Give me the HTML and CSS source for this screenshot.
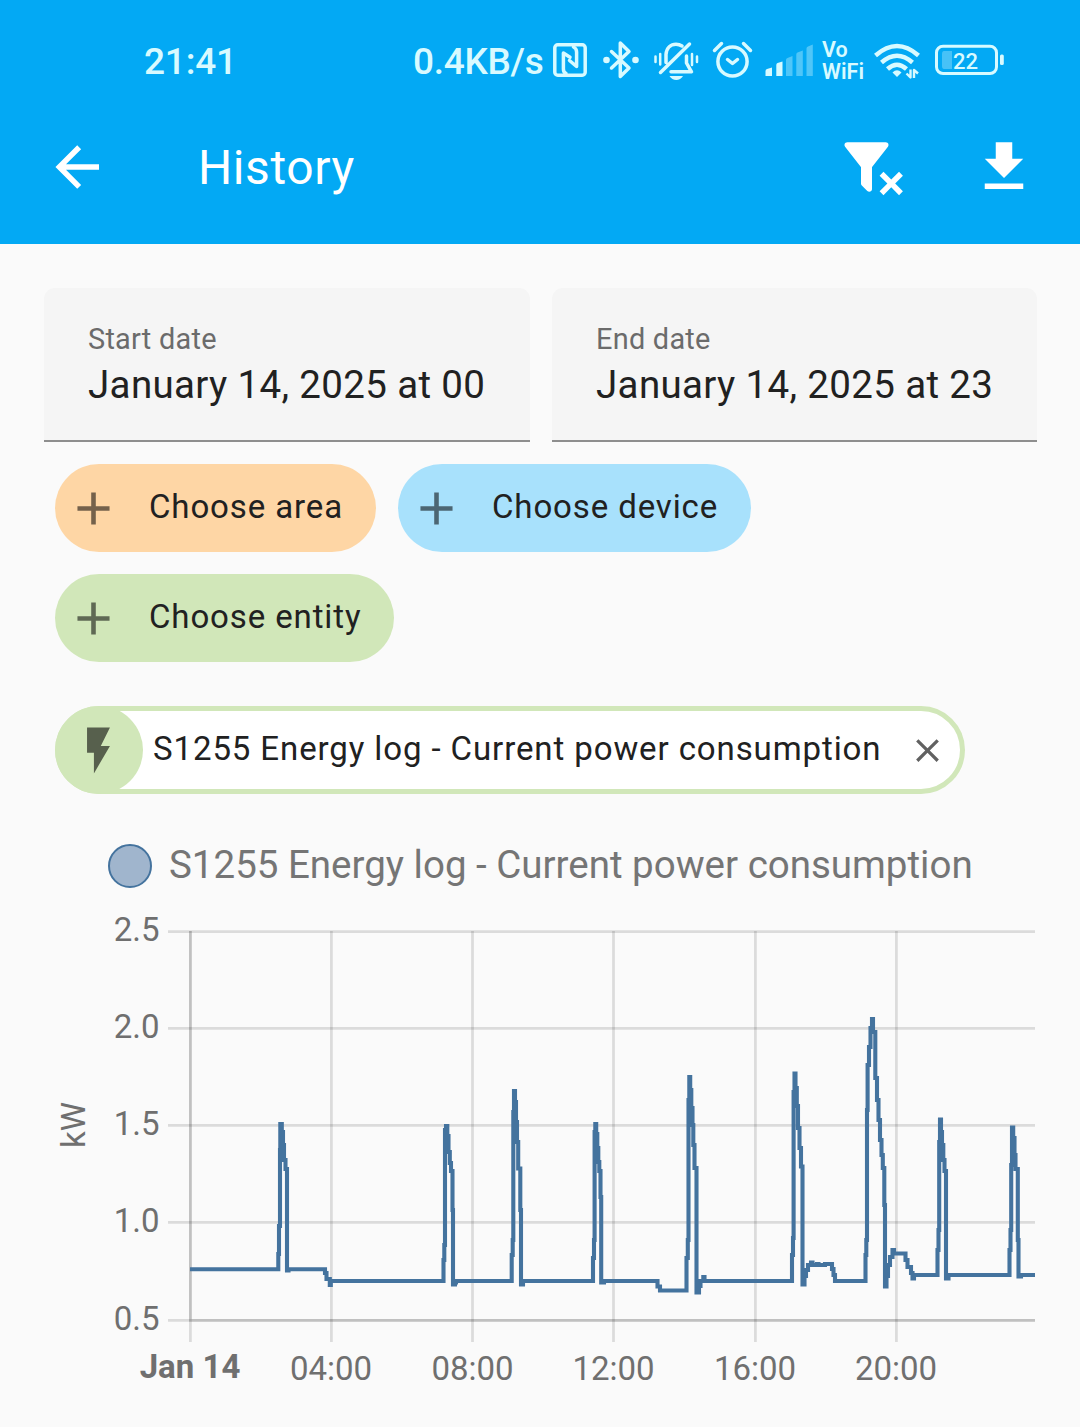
FILE: index.html
```html
<!DOCTYPE html>
<html lang="en">
<head>
  <meta charset="UTF-8" />
  <title>History</title>
  <link rel="stylesheet" href="styles.css">
</head>
<body>
  <header class="header">
    <div class="status-bar">
      <span class="clock">21:41</span>
      <span class="speed">0.4KB/s</span>
      <div class="status-icons">
        <!-- nfc -->
        <svg width="48" height="48" viewBox="548 36 48 48" class="line">
          <rect x="554.8" y="44.8" width="30.4" height="30.4" rx="3" />
          <path d="M566 73.500Q563.400 72.500 563.400 69V53L570 57.200M573.500 47Q576.600 48.500 576.600 52V66.500L569.500 60.500" />
        </svg>
        <!-- bluetooth -->
        <svg width="50" height="48" viewBox="596 36 50 48" class="line">
          <path d="M611.500 51.500L629 68L620.300 76.500V43L629 51.500L611.500 68" />
          <circle cx="606.5" cy="60" r="3.300" class="solid" />
          <circle cx="635.5" cy="60" r="3.300" class="solid" />
        </svg>
        <!-- vibrate, muted bell -->
        <svg width="60" height="48" viewBox="646 36 60 48" class="line">
          <path d="M689.500 44L660.500 72.500M666 62.500V54.500C666.500 47.500 671 44.200 676 44.200C678.500 44.200 680.500 45 682 46M686.500 56V63L691.500 71.800H671" />
          <path d="M655.500 56.500V62M660.200 54V64.500M692 54V65M697 56.500V62" class="thin" />
          <path d="M669.500 76H683Q680.500 80 676.300 80Q672 80 669.500 76Z" class="solid" />
        </svg>
        <!-- alarm -->
        <svg width="54" height="48" viewBox="706 36 54 48" class="line">
          <circle cx="732.5" cy="61.5" r="14.6" />
          <path d="M727.500 59.500L732.500 63.500L737.500 59.500M714.500 50.500L721.500 43.500M743.500 43.500L750.500 50.500" />
        </svg>
        <!-- signal -->
        <svg width="58" height="48" viewBox="760 36 58 48" class="fill">
          <path d="M765.500 71Q765.500 69.500 767 69L772 67.500V76H765.500ZM776.300 65Q776.300 63.500 777.500 63L782.500 61.500V76H776.300Z" />
          <path opacity=".36" d="M786 60Q786 58.500 787.500 58L792.500 56V76H786ZM796.300 54.500Q796.300 53 797.500 52.500L802.800 50.500V76H796.300ZM806.500 48.500Q806.500 47 808 46.500L812.800 44.500V76H806.500Z" />
        </svg>
        <svg width="50" height="48" viewBox="818 36 50 48" class="fill vowifi">
          <text x="822" y="57">Vo</text>
          <text x="822" y="78.500" textLength="42">WiFi</text>
        </svg>
        <!-- wifi -->
        <svg width="58" height="48" viewBox="868 36 58 48" class="line wifi">
          <path d="M875.500 55.500Q897 36.500 918.500 55.500M881.500 62.500Q897 49 912.500 62.500M887.500 69Q897 60.500 906.500 69" />
          <path d="M892.500 72.500Q897 68 901.500 72.500L897 77Z" class="dot" />
          <path d="M906.500 73.500L910.500 77.500V69.500M914 78V70L918 73.500" class="arrows" />
        </svg>
        <!-- battery -->
        <svg width="84" height="48" viewBox="926 36 84 48" class="line battery">
          <rect x="936.5" y="46.200" width="60" height="27.300" rx="6.500" />
          <path d="M944 51H952V69H944Q942 69 942 66V54Q942 51 944 51Z" class="level" />
          <rect x="1000" y="54.500" width="3.800" height="10.500" rx="1.500" class="dot" />
          <text x="953" y="69">22</text>
        </svg>
      </div>
    </div>

    <div class="toolbar">
      <svg class="icon" viewBox="0 0 24 24"><path d="M20,11V13H8L13.5,18.5L12.08,19.92L4.16,12L12.08,4.08L13.5,5.5L8,11H20Z" /></svg>
      <h1>History</h1>
      <svg class="icon" viewBox="0 0 24 24"><path d="M14.76,20.83L17.6,18L14.76,15.17L16.17,13.76L19,16.57L21.83,13.76L23.24,15.17L20.43,18L23.24,20.83L21.83,22.24L19,19.4L16.17,22.24L14.76,20.83M12,12V19.88C12.04,20.18 11.94,20.5 11.71,20.71C11.32,21.1 10.69,21.1 10.3,20.71L8.29,18.7C8.06,18.47 7.96,18.16 8,17.87V12H7.97L2.21,4.62C1.87,4.19 1.95,3.56 2.38,3.22C2.57,3.08 2.78,3 3,3V3H17V3C17.22,3 17.43,3.08 17.62,3.22C18.05,3.56 18.13,4.19 17.79,4.62L12.03,12H12Z" /></svg>
      <svg class="icon" viewBox="0 0 24 24"><path d="M5,20H19V18H5M19,9H15V3H9V9H5L12,16L19,9Z" /></svg>
    </div>
  </header>

  <main>
    <div class="dates">
      <div class="date-field">
        <label>Start date</label>
        <div class="value">January 14, 2025 at 00</div>
      </div>
      <div class="date-field">
        <label>End date</label>
        <div class="value">January 14, 2025 at 23</div>
      </div>
    </div>

    <div class="chips">
      <div class="chip area">
        <svg viewBox="0 0 24 24"><path d="M19,13H13V19H11V13H5V11H11V5H13V11H19V13Z" /></svg>
        <span>Choose area</span>
      </div>
      <div class="chip device">
        <svg viewBox="0 0 24 24"><path d="M19,13H13V19H11V13H5V11H11V5H13V11H19V13Z" /></svg>
        <span>Choose device</span>
      </div>
      <div class="chip entity">
        <svg viewBox="0 0 24 24"><path d="M19,13H13V19H11V13H5V11H11V5H13V11H19V13Z" /></svg>
        <span>Choose entity</span>
      </div>
    </div>

    <div class="selected">
      <div class="selected-icon">
        <svg viewBox="0 0 24 24"><path d="M7,2V13H10V22L17,10H13L17,2H7Z" /></svg>
      </div>
      <span>S1255 Energy log - Current power consumption</span>
      <svg class="close" viewBox="0 0 24 24"><path d="M19,6.41L17.59,5L12,10.59L6.41,5L5,6.41L10.59,12L5,17.59L6.41,19L12,13.41L17.59,19L19,17.59L13.41,12L19,6.41Z" /></svg>
    </div>

    <div class="legend">
      <i class="bullet"></i>
      <span>S1255 Energy log - Current power consumption</span>
    </div>

    <svg class="chart" width="1080" height="527" viewBox="0 900 1080 527">
      <g class="grid">
        <path d="M168 931.500H1035M168 1028.300H1035M168 1125.400H1035M168 1222.300H1035M168 1320.300H1035" />
        <path d="M190.400 931V1342M331.400 931V1342M472.500 931V1342M613.500 931V1342M755.400 931V1342M896.400 931V1342" />
        <path d="M190.400 931V1320.300H1035" />
      </g>
      <g class="y-labels">
        <text x="159.500" y="941">2.5</text>
        <text x="159.500" y="1038">2.0</text>
        <text x="159.500" y="1135">1.5</text>
        <text x="159.500" y="1232">1.0</text>
        <text x="159.500" y="1330">0.5</text>
      </g>
      <g class="x-labels">
        <text x="190" y="1378" class="day">Jan 14</text>
        <text x="331" y="1380">04:00</text>
        <text x="472.500" y="1380">08:00</text>
        <text x="613.500" y="1380">12:00</text>
        <text x="755" y="1380">16:00</text>
        <text x="896" y="1380">20:00</text>
      </g>
      <text class="unit" transform="translate(85 1125) rotate(-90)">kW</text>
      <polyline class="series" points="
        190,1269.3 278.3,1269.3 278.3,1254 279,1254 279,1226 280,1226 280,1150 280.3,1150 280.3,1124 281.800,1124 281.800,1132 283,1132 283,1145 284,1145 284,1160 285.500,1160 285.500,1169 287,1169 287,1270.500 288.500,1270.500 288.500,1269.3
        325,1269.3 325,1273 326.500,1273 326.500,1279 329.800,1279 329.800,1285 330.800,1285 330.800,1281
        443.500,1281 443.500,1260 444.300,1260 444.300,1245 445,1245 445,1130 446,1130 446,1126 447.300,1126 447.300,1136 448.500,1136 448.500,1152 449.800,1152 449.800,1163 451,1163 451,1171 452.500,1171 452.500,1210 453,1210 453,1284.500 455,1284.500 455,1282.500 456,1282.500 456,1281
        511.700,1281 511.700,1255 512.700,1255 512.700,1240 513.300,1240 513.300,1112 514,1112 514,1091 515,1091 515,1102 516,1102 516,1122 517,1122 517,1142 518.200,1142 518.200,1168.500 520.300,1168.500 520.300,1210 521,1210 521,1284.500 523,1284.500 523,1281
        593,1281 593,1258 594,1258 594,1240 594.600,1240 594.600,1132 595.300,1132 595.300,1124 596.200,1124 596.200,1134 597.300,1134 597.300,1148 598.300,1148 598.300,1162 599.300,1162 599.300,1171 600.500,1171 600.500,1197 601.200,1197 601.200,1282.500 604,1282.500 604,1281
        657.500,1281 657.500,1286.500 660,1286.500 660,1290.500 686.500,1290.500 686.500,1258 687.800,1258 687.800,1240 688.500,1240 688.500,1100 689.300,1100 689.300,1077 690.200,1077 690.200,1090 691.300,1090 691.300,1108 692.500,1108 692.500,1125 693.300,1125 693.300,1145 694.500,1145 694.500,1168 696.500,1168 696.500,1292.500 699,1292.500 699,1286 700.500,1286 700.500,1281 703.300,1281 703.300,1277 704.500,1277 704.500,1281
        792,1281 792,1255 793,1255 793,1238 793.600,1238 793.600,1092 794.500,1092 794.500,1073.500 795.500,1073.500 795.500,1088 796.800,1088 796.800,1106 798,1106 798,1128 799.500,1128 799.500,1148 801,1148 801,1166.500 802.500,1166.500 802.500,1284.500 804.500,1284.500 804.500,1276 806,1276 806,1270 808,1270 808,1265 811,1265 811,1262.500 812.500,1262.500 812.500,1265 817,1265 817,1264 818.500,1264 818.500,1265 825,1265 825,1264 832,1264 832,1269 833.500,1269 833.500,1275 835,1275 835,1281
        865.500,1281 865.500,1255 866.300,1255 866.300,1240 867,1240 867,1110 867.600,1110 867.600,1065 869,1065 869,1047 870.500,1047 870.500,1028 872,1028 872,1019 873,1019 873,1032 875.300,1032 875.300,1078 877,1078 877,1100 878.500,1100 878.500,1120 880,1120 880,1140 881.500,1140 881.500,1155 882.800,1155 882.800,1168 884.300,1168 884.300,1205 885,1205 885,1286.500 886.500,1286.500 886.500,1276 888,1276 888,1265 890,1265 890,1257 892.500,1257 892.500,1250 894,1250 894,1253.500
        905.500,1253.500 905.500,1260 907.500,1260 907.500,1267 911,1267 911,1273 912.500,1273 912.500,1278.500 914,1278.500 914,1275
        937.500,1275 937.500,1250 938.500,1250 938.500,1230 939.200,1230 939.200,1142 940,1142 940,1119.500 941,1119.500 941,1132 942,1132 942,1145 943.300,1145 943.300,1160 944.500,1160 944.500,1171 946,1171 946,1278.500 948.500,1278.500 948.500,1275
        1009.500,1275 1009.500,1250 1010.500,1250 1010.500,1230 1011.200,1230 1011.200,1165 1012,1165 1012,1127.500 1013.200,1127.500 1013.200,1138 1014.500,1138 1014.500,1155 1015.500,1155 1015.500,1169 1017.800,1169 1017.800,1240 1018.500,1240 1018.500,1276.500 1021,1276.500 1021,1275 1035,1275" />
    </svg>
  </main>
</body>
</html>
```

FILE: styles.css
```css
body {
  margin: 0;
  width: 1080px;
  height: 1427px;
  overflow: hidden;
  background: #fafafa;
  color: #212121;
  font-family: Roboto, sans-serif;
  white-space: nowrap;
}

svg {
  display: block;
  flex-shrink: 0;
}

.header {
  height: 244px;
  background: #03a9f4;
  color: #fff;
}

.status-bar {
  display: flex;
  height: 120px;
  box-sizing: border-box;
  padding-left: 144px;
  color: #d8faff;
  font-size: 37px;
  font-weight: 500;
  line-height: 123px;
}

.clock {
  width: 269px;
  letter-spacing: -0.2px;
}

.speed {
  width: 135px;
  letter-spacing: -0.3px;
}

.status-icons {
  display: flex;
  padding-top: 36px;
}

.line {
  fill: none;
  stroke: #d8faff;
  stroke-width: 3.5;
  stroke-linecap: round;
  stroke-linejoin: round;
}

.fill,
.solid,
.dot {
  fill: #d8faff;
}

.solid,
.dot {
  stroke: none;
}

.thin {
  stroke-width: 2.5;
}

.vowifi text {
  font-size: 21.5px;
  font-weight: 600;
  letter-spacing: 0;
}

.wifi {
  stroke-width: 4.5;
  stroke-linecap: butt;
}

.wifi .arrows {
  stroke-width: 2.4;
}

.battery {
  stroke-width: 3;
}

.battery .level {
  fill: #d8faff;
  stroke: none;
  opacity: 0.32;
}

.battery text {
  fill: #d8faff;
  stroke: none;
  font-size: 22px;
}

.toolbar {
  display: flex;
  align-items: center;
  height: 66px;
  padding: 14px 43px 0 44px;
}

.toolbar h1 {
  flex: 1;
  margin: 0 0 0 88px;
  font-size: 48px;
  font-weight: 400;
  letter-spacing: 0.6px;
}

.icon {
  width: 66px;
  height: 66px;
  fill: #fff;
}

.icon + .icon {
  margin-left: 66px;
}

.dates {
  display: grid;
  grid-template-columns: 486px 485px;
  gap: 22px;
  padding: 44px 44px 0;
}

.date-field {
  height: 154px;
  box-sizing: border-box;
  padding: 34px 44px 0;
  overflow: hidden;
  background: #f5f5f5;
  border-bottom: 2px solid #8e8e8e;
  border-radius: 11px 11px 0 0;
}

.date-field label {
  display: block;
  color: #6b6b6b;
  font-size: 28.9px;
  line-height: 34px;
  letter-spacing: 0.25px;
}

.date-field .value {
  font-size: 38.5px;
  line-height: 58px;
  letter-spacing: 0.35px;
}

.chips {
  display: flex;
  flex-wrap: wrap;
  gap: 22px;
  padding: 22px 55px 0;
}

.chip {
  display: flex;
  align-items: center;
  height: 88px;
  border-radius: 44px;
  font-size: 33px;
  letter-spacing: 0.88px;
}

.chip svg {
  width: 55px;
  height: 55px;
  margin: 1px 28px 0 11px;
  opacity: 0.54;
}

.chip span {
  margin-top: -3px;
}

.chip.area {
  width: 321px;
  background: #fed6a5;
}

.chip.device {
  width: 353px;
  background: #a8e1fc;
}

.chip.entity {
  width: 339px;
  background: #d1e7b9;
}

.selected {
  display: flex;
  align-items: center;
  width: 910px;
  height: 88px;
  box-sizing: border-box;
  margin: 44px 0 0 55px;
  border: 5px solid #d1e7b9;
  border-radius: 44px;
  background: #fff;
  font-size: 33px;
  letter-spacing: 0.9px;
}

.selected-icon {
  display: flex;
  align-items: center;
  justify-content: center;
  width: 88px;
  height: 88px;
  margin: 0 10px 0 -5px;
  border-radius: 50%;
  background: #d1e7b9;
}

.selected-icon svg {
  width: 55px;
  height: 55px;
  margin-right: 1px;
  opacity: 0.58;
}

.selected span {
  width: 728px;
  margin-top: -3px;
}

.close {
  width: 39px;
  height: 39px;
  margin-left: 27px;
  fill: #616161;
}

.legend {
  display: flex;
  align-items: center;
  height: 44px;
  margin: 50px 0 0 108px;
  color: #757575;
  font-size: 38.5px;
}

.bullet {
  width: 44px;
  height: 44px;
  box-sizing: border-box;
  margin-right: 17px;
  border: 2px solid #44739e;
  border-radius: 50%;
  background: #a0b5cd;
}

.legend span {
  margin-top: -3px;
}

.chart {
  margin-top: 12px;
  fill: #6f6f6f;
  font-size: 33px;
}

.grid {
  fill: none;
  stroke: rgba(0, 0, 0, 0.12);
  stroke-width: 2.75;
}

.y-labels {
  text-anchor: end;
}

.x-labels,
.unit {
  text-anchor: middle;
}

.day {
  font-weight: 700;
}

.series {
  fill: none;
  stroke: #44739e;
  stroke-width: 4.1;
}
```
